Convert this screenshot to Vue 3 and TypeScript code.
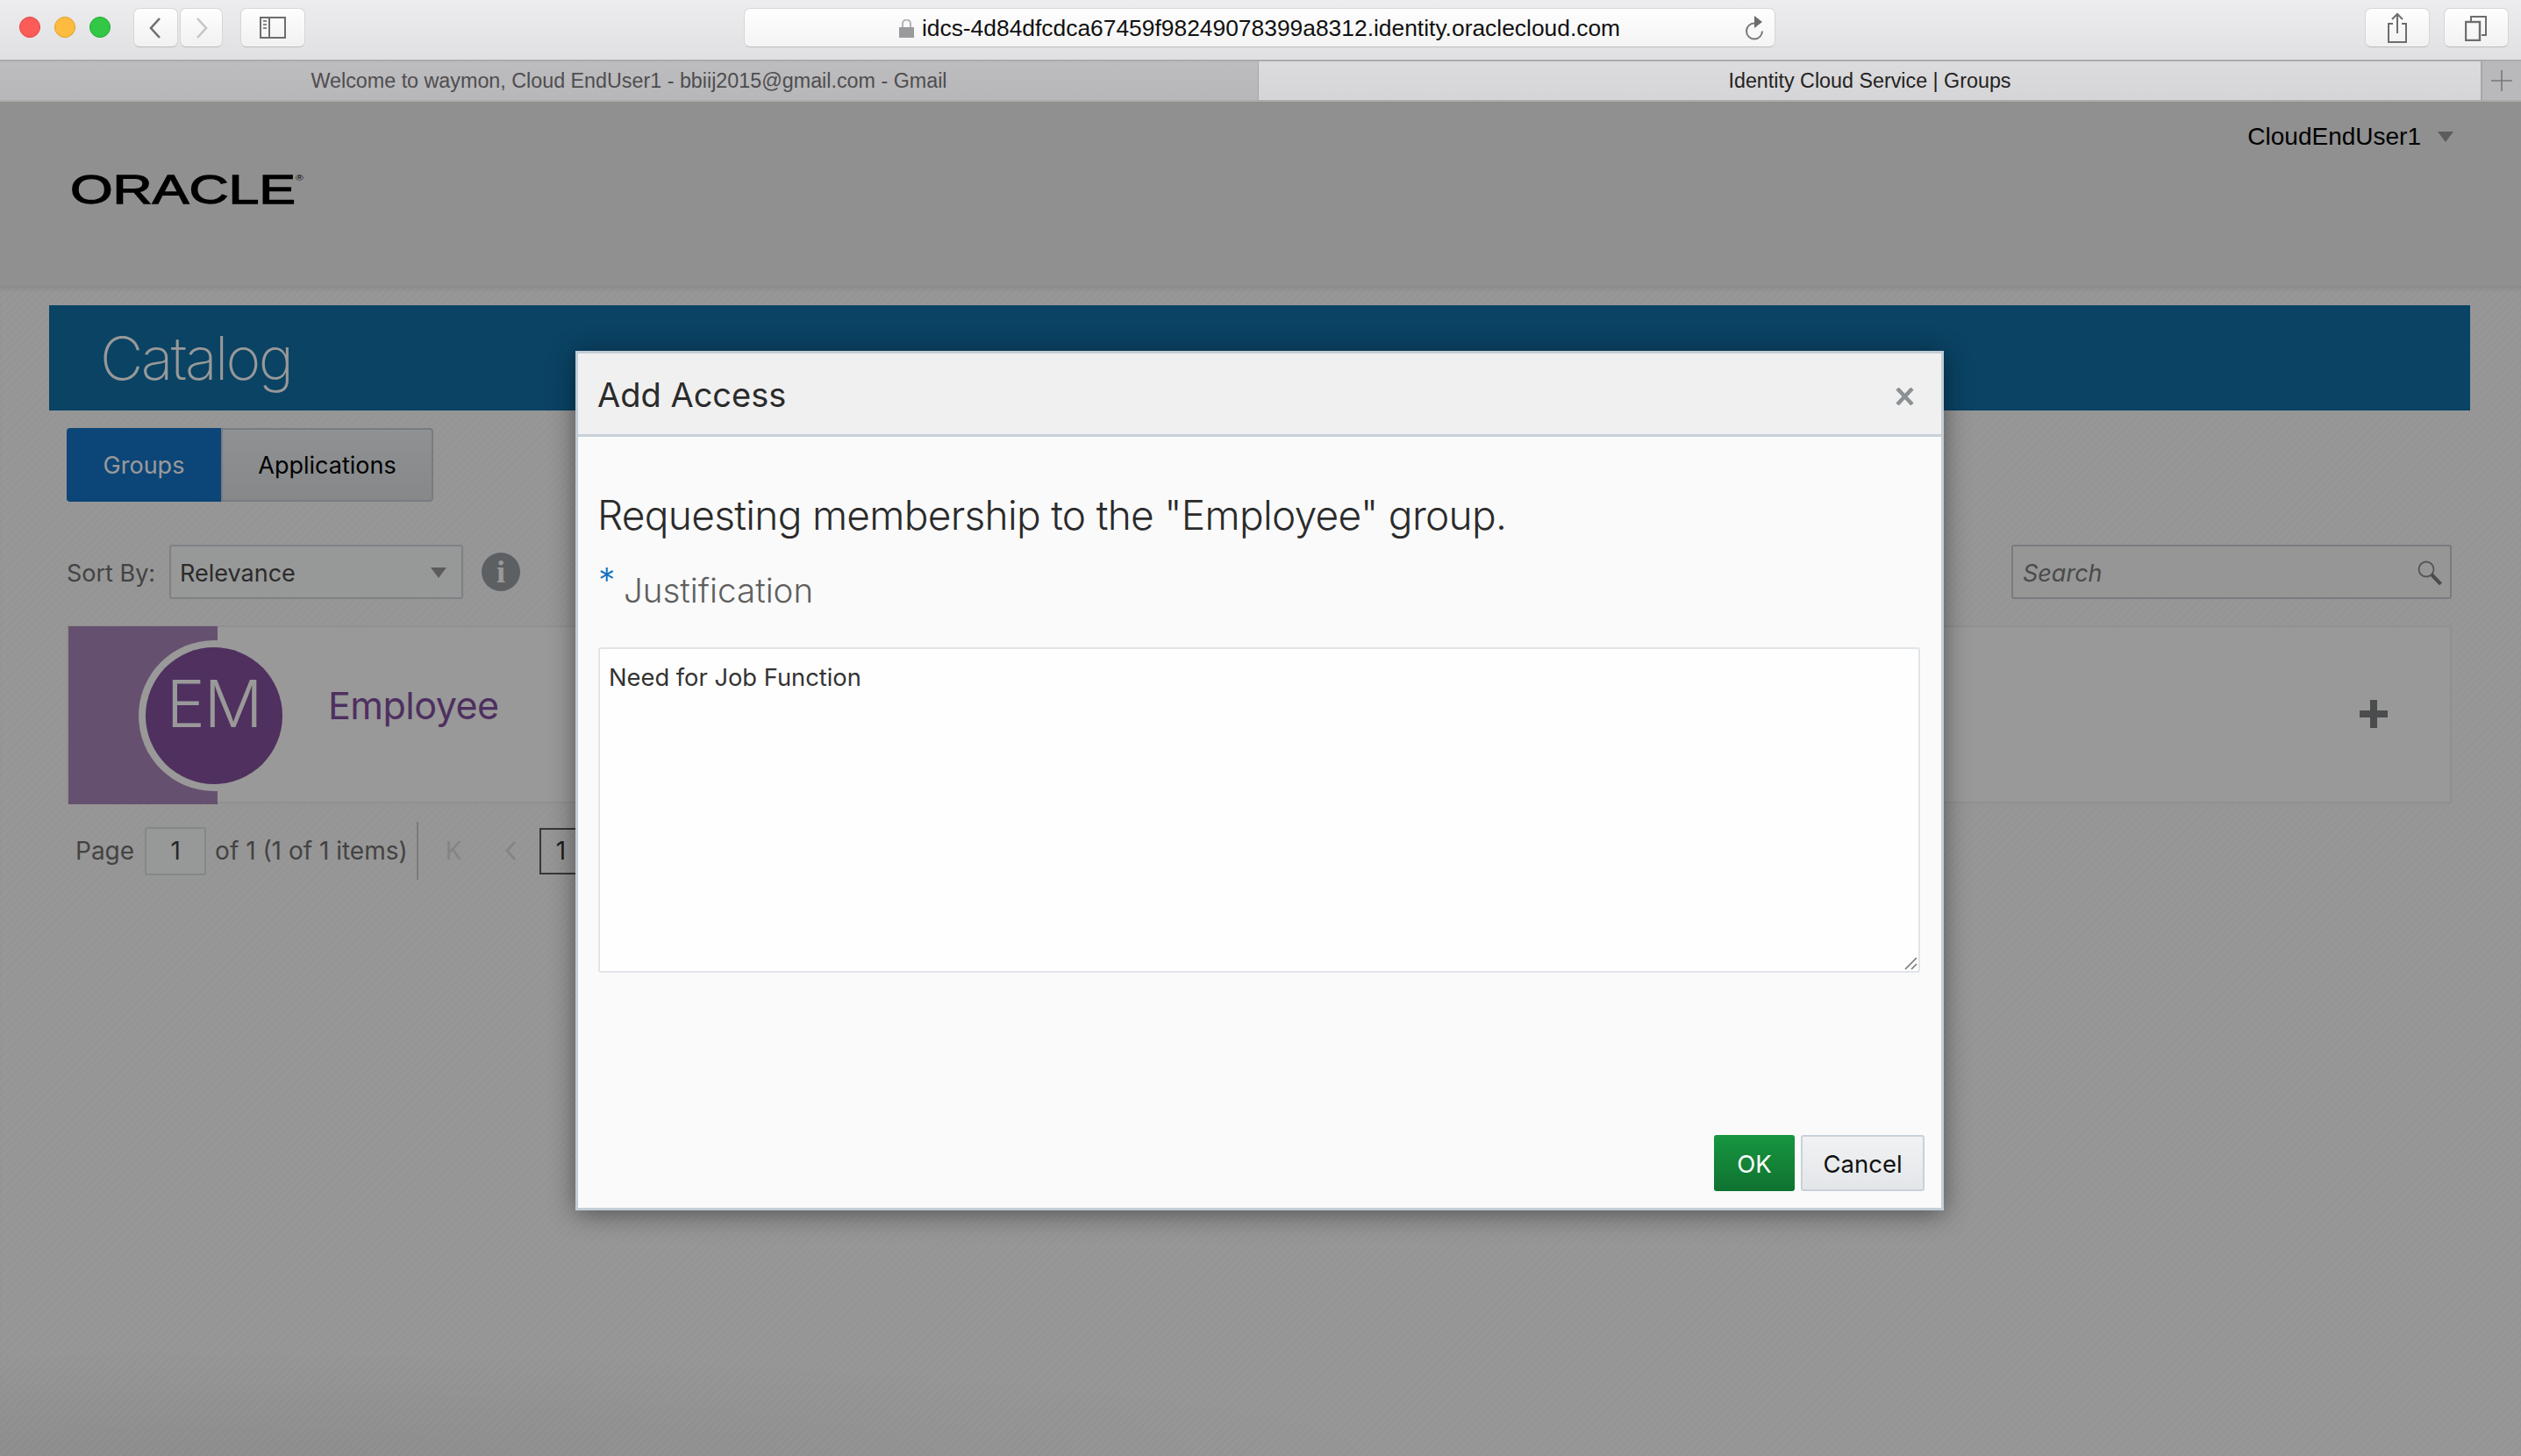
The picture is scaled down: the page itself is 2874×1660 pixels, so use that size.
<template>
  <div class="screen">
    <div class="toolbar">
      <div class="lights">
        <span class="light red"></span>
        <span class="light amber"></span>
        <span class="light green"></span>
      </div>
      <div class="nav-pair">
        <button class="tool-btn back">
          <svg width="16" height="26" viewBox="0 0 16 26"><path d="M12 2 2 13l10 11" fill="none" stroke="#6f6f71" stroke-width="2.6" /></svg>
        </button>
        <button class="tool-btn forward">
          <svg width="16" height="26" viewBox="0 0 16 26"><path d="m3 2 10 11L3 24" fill="none" stroke="#c6c6c8" stroke-width="2.6" /></svg>
        </button>
      </div>
      <button class="tool-btn sidebar">
        <svg width="30" height="25" viewBox="0 0 30 25">
          <rect x="1" y="1" width="28" height="23" fill="none" stroke="#6d6d6f" stroke-width="2" />
          <path d="M11 1v23" stroke="#6d6d6f" stroke-width="2" />
          <path d="M4 5h4M4 9h4M4 13h4" stroke="#8a8a8c" stroke-width="2" />
        </svg>
      </button>
      <div class="address">
        <svg class="lock" width="17" height="21" viewBox="0 0 17 21">
          <rect x="0" y="9" width="17" height="12" fill="#9a9a9c" />
          <path d="M4 9V5a4.500 4.500 0 0 1 9 0v4" fill="none" stroke="#b2b2b4" stroke-width="2" />
        </svg>
        <span class="url">{{ url }}</span>
        <svg class="reload" width="24" height="30" viewBox="0 0 24 30">
          <path d="M13 7.500a9 9 0 1 0 9 9" fill="none" stroke="#77777a" stroke-width="2" transform="translate(-1 2)" />
          <path d="M12 1l9 7-9 7z" fill="#6c6c6e" />
        </svg>
      </div>
      <button class="tool-btn action">
        <svg width="24" height="36" viewBox="0 0 24 36">
          <path d="M7 13H2v21h20V13h-5" fill="none" stroke="#6d6d6f" stroke-width="2" />
          <path d="M12 24V2M6 8l6-6 6 6" fill="none" stroke="#6d6d6f" stroke-width="2" />
        </svg>
      </button>
      <button class="tool-btn action">
        <svg width="26" height="30" viewBox="0 0 26 30">
          <rect x="1" y="8" width="16" height="21" fill="none" stroke="#6d6d6f" stroke-width="2.400" />
          <path d="M7 7V2h17v21h-5" fill="none" stroke="#6d6d6f" stroke-width="2" />
        </svg>
      </button>
    </div>

    <div class="tabstrip">
      <div class="browser-tab idle">{{ tabs[0] }}</div>
      <div class="browser-tab current">{{ tabs[1] }}</div>
      <div class="new-tab">
        <svg width="24" height="24" viewBox="0 0 24 24"><path d="M12 0v24M0 12h24" stroke="#77777a" stroke-width="1.600" /></svg>
      </div>
    </div>

    <div class="page">
      <header class="page-header">
        <div class="logo">ORACLE<sup>®</sup></div>
        <div class="user">
          <span>CloudEndUser1</span>
          <i class="caret"></i>
        </div>
      </header>

      <main class="content">
        <div class="banner"><h1>Catalog</h1></div>

        <div class="tabs">
          <button class="tab selected">Groups</button>
          <button class="tab">Applications</button>
        </div>

        <div class="filters">
          <label class="sort-label">Sort By:</label>
          <div class="select">
            <span>Relevance</span>
            <i class="caret small"></i>
          </div>
          <span class="info">i</span>
          <div class="search">
            <span>Search</span>
            <svg width="28" height="28" viewBox="0 0 28 28">
              <circle cx="10" cy="10" r="8.500" fill="none" stroke="#8d8f91" stroke-width="1.800" />
              <path d="m16 16 10.500 11" stroke="#7b7d7f" stroke-width="4" />
            </svg>
          </div>
        </div>

        <div class="card">
          <div class="card-band"></div>
          <div class="avatar">EM</div>
          <div class="card-name">Employee</div>
          <svg class="add" width="32" height="32" viewBox="0 0 32 32"><path d="M16 0v32M0 16h32" stroke="#7c7f82" stroke-width="8" /></svg>
        </div>

        <div class="pager">
          <span>Page</span>
          <span class="page-input">1</span>
          <span>of 1 (1 of 1 items)</span>
          <span class="pager-rule"></span>
          <span class="pager-first">K</span>
          <svg class="pager-prev" width="14" height="24" viewBox="0 0 14 24"><path d="M12 2 3 12l9 10" fill="none" stroke="#dedede" stroke-width="3" /></svg>
          <span class="page-current">1</span>
        </div>
      </main>

      <div class="scrim"></div>
    </div>

    <section class="dialog">
      <div class="dialog-head">
        <h2>Add Access</h2>
        <svg class="close" width="21" height="20" viewBox="0 0 21 20"><path d="m2 1 17 18M19 1 2 19" stroke="#8a9094" stroke-width="4.500" /></svg>
      </div>
      <div class="dialog-body">
        <p class="request">Requesting membership to the "Employee" group.</p>
        <div class="field-label"><span class="required">*</span><span>Justification</span></div>
        <div class="justify-wrap">
          <textarea v-model="justification" class="justify"></textarea>
          <svg class="grip" width="15" height="15" viewBox="0 0 15 15"><path d="M1 14 14 1M8 14l6-6" stroke="#707070" stroke-width="1.500" /></svg>
        </div>
      </div>
      <div class="dialog-foot">
        <button class="btn ok">OK</button>
        <button class="btn cancel">Cancel</button>
      </div>
    </section>
  </div>
</template>

<script setup lang="ts">
import { ref } from 'vue'

const url = 'idcs-4d84dfcdca67459f98249078399a8312.identity.oraclecloud.com'
const tabs: string[] = [
  'Welcome to waymon, Cloud EndUser1 - bbiij2015@gmail.com - Gmail',
  'Identity Cloud Service | Groups',
]
const justification = ref('Need for Job Function')
</script>

<style>
html,
body {
  margin: 0;
  background: #8f8f8f;
}
</style>

<style scoped>
.screen {
  position: relative;
  width: 2874px;
  height: 1660px;
  overflow: hidden;
  display: flex;
  flex-direction: column;
  font-family: "Liberation Sans", Arial, sans-serif;
}

button {
  font-family: inherit;
  padding: 0;
  cursor: pointer;
}

/* browser chrome */
.toolbar {
  height: 68px;
  box-sizing: border-box;
  padding: 9px 14px 14px 22px;
  display: flex;
  align-items: stretch;
  background: linear-gradient(#edecee, #e0dfe1);
}

.lights {
  display: flex;
  align-items: center;
  gap: 16px;
  width: 130px;
  margin-top: -1px;
}

.light {
  width: 24px;
  height: 24px;
  border-radius: 50%;
  box-sizing: border-box;
}

.red {
  background: #fc5c57;
  border: 1px solid #e0443e;
}

.amber {
  background: #fdbc3f;
  border: 1px solid #dfa023;
}

.green {
  background: #33c748;
  border: 1px solid #1dad2b;
}

.tool-btn {
  display: flex;
  align-items: center;
  justify-content: center;
  box-sizing: border-box;
  border: 1px solid #d6d5d7;
  border-bottom-color: #bdbcbe;
  border-radius: 7px;
  background: linear-gradient(#fefefe, #f1f1f1);
}

.nav-pair {
  display: flex;
  gap: 2px;
}

.back {
  width: 51px;
}

.forward {
  width: 49px;
}

.sidebar {
  width: 74px;
  margin-left: 20px;
}

.address {
  width: 1176px;
  margin-left: 500px;
  margin-right: auto;
  box-sizing: border-box;
  position: relative;
  display: flex;
  align-items: center;
  justify-content: center;
  gap: 9px;
  padding-top: 2px;
  border: 1px solid #d6d5d7;
  border-bottom-color: #bdbcbe;
  border-radius: 7px;
  background: linear-gradient(#fefefe, #f4f4f4);
}

.url {
  font-size: 26.4px;
  color: #111;
}

.reload {
  position: absolute;
  right: 11px;
  top: 7px;
}

.action {
  width: 74px;
  margin-left: 16px;
}

.action:first-of-type {
  margin-left: 0;
}

.tabstrip {
  height: 48px;
  display: flex;
  box-sizing: border-box;
  border-top: 2px solid #ababad;
  border-bottom: 2px solid #ababad;
  font-size: 23.3px;
}

.browser-tab {
  display: flex;
  align-items: center;
  justify-content: center;
}

.idle {
  width: 1435px;
  background: linear-gradient(#bdbcbe, #b7b6b8);
  color: #4e4d50;
  border-right: 1px solid #a6a5a7;
  box-sizing: border-box;
}

.current {
  width: 1393px;
  background: linear-gradient(#dcdbdd, #d5d4d6);
  color: #222;
}

.new-tab {
  flex: 1;
  display: flex;
  align-items: center;
  justify-content: center;
  background: #b9b8ba;
  border-left: 2px solid #a6a5a7;
}

/* page under the dialog */
.page {
  position: relative;
  flex: 1;
  display: flex;
  flex-direction: column;
}

.page-header {
  height: 210px;
  box-sizing: border-box;
  display: flex;
  justify-content: space-between;
  background: #f0f0f0;
  padding: 20px 77px 0 80px;
}

.logo {
  margin-top: 53px;
  font-size: 47px;
  line-height: 54px;
  height: 54px;
  font-weight: 400;
  color: #000;
  -webkit-text-stroke: 1.3px #000;
  transform: scaleX(1.33);
  transform-origin: left;
}

.logo sup {
  font-size: 9px;
  vertical-align: 26px;
  line-height: 0;
  -webkit-text-stroke: 0;
}

.user {
  display: flex;
  align-items: center;
  gap: 19px;
  height: 40px;
  font-size: 28px;
  color: #000;
}

.caret {
  display: block;
  width: 0;
  height: 0;
  border-left: 9px solid transparent;
  border-right: 9px solid transparent;
  border-top: 12px solid #999;
}

.content {
  flex: 1;
  box-sizing: border-box;
  padding: 22px 58px 0 56px;
  font-family: Inter, "Liberation Sans", sans-serif;
  background:
    radial-gradient(1400px 120px at 200px 1334px, rgba(0, 0, 0, .06), transparent),
    repeating-linear-gradient(135deg, #fcfcfc 0 3px, #f8f8f8 3px 6px);
  box-shadow: inset 0 6px 6px -4px rgba(0, 0, 0, .12);
}

.banner {
  height: 120px;
  box-sizing: border-box;
  padding: 18px 0 0 58px;
  background: #1271a7;
}

.banner h1 {
  margin: 0;
  font-size: 68px;
  line-height: 84px;
  font-weight: 200;
  color: #fff;
  letter-spacing: -2.6px;
}

.tabs {
  display: flex;
  margin: 20px 0 0 20px;
  height: 84px;
}

.tab {
  font-size: 27px;
  border: 2px solid #c8ced5;
  background: linear-gradient(#eff2f5, #dfe3e6);
  color: #000;
  width: 242px;
  border-radius: 0 4px 4px 0;
  font-family: inherit;
}

.tab.selected {
  width: 176px;
  border: 0;
  border-radius: 4px 0 0 4px;
  background: #1573c6;
  color: #fff;
}

.filters {
  display: flex;
  align-items: center;
  height: 62px;
  margin: 49px 21px 0 20px;
  font-size: 27px;
  color: #707070;
}

.sort-label {
  width: 117px;
  padding-top: 2px;
}

.select {
  width: 335px;
  height: 62px;
  box-sizing: border-box;
  border: 2px solid #d3d8dd;
  border-radius: 3px;
  background: #fcfefe;
  display: flex;
  align-items: center;
  justify-content: space-between;
  padding: 2px 17px 0 10px;
  color: #484848;
}

.info {
  width: 44px;
  height: 44px;
  margin-left: 21px;
  border-radius: 50%;
  background: #9aa0a6;
  color: #fff;
  font-family: "Liberation Serif", serif;
  font-weight: 700;
  font-size: 36px;
  line-height: 44px;
  text-align: center;
}

.search {
  margin-left: auto;
  width: 502px;
  height: 62px;
  box-sizing: border-box;
  border: 2px solid #c8ced5;
  border-radius: 3px;
  background: #f8faf9;
  display: flex;
  align-items: center;
  justify-content: space-between;
  padding: 2px 9px 0 11px;
  font-style: italic;
  color: #7c7c7c;
}

.card {
  position: relative;
  margin: 30px 21px 0 20px;
  height: 203px;
  box-sizing: border-box;
  border: 2px solid #f0f0f0;
  background: #fff;
  display: flex;
  align-items: center;
}

.card-band {
  width: 170px;
  align-self: stretch;
  margin: -1px 0 -3px 0;
  background: #ab85b9;
}

/* ring sits on top of the band */
.avatar {
  position: absolute;
  left: 88px;
  top: 23px;
  width: 156px;
  height: 128px;
  padding-bottom: 28px;
  border-radius: 50%;
  background: #84519e;
  box-shadow: 0 0 0 8px #fff;
  color: #fff;
  font-size: 74px;
  font-weight: 300;
  display: flex;
  align-items: center;
  justify-content: center;
  letter-spacing: -1px;
}

.card-name {
  margin: -21px 0 0 126px;
  font-size: 43px;
  color: #834fa0;
  letter-spacing: -.5px;
}

.add {
  margin-left: auto;
  margin-right: 71px;
  margin-top: -2px;
}

.pager {
  display: flex;
  align-items: center;
  height: 66px;
  margin: 21px 0 0 30px;
  font-size: 28px;
  color: #707070;
}

.page-input {
  width: 70px;
  height: 55px;
  margin: 0 10px 0 12px;
  box-sizing: border-box;
  border: 2px solid #dde1e5;
  border-radius: 3px;
  background: #fcfdfd;
  color: #444;
  display: flex;
  align-items: center;
  justify-content: center;
}

.pager-rule {
  width: 2px;
  height: 66px;
  margin: 0 31px 0 10px;
  background: #c8ced5;
}

.pager-first {
  color: #ddd;
  margin-right: 48px;
}

.pager-prev {
  margin-right: 26px;
}

.page-current {
  width: 50px;
  height: 53px;
  box-sizing: border-box;
  border: 2px solid #5c5c5c;
  color: #333;
  display: flex;
  align-items: center;
  justify-content: center;
}

.scrim {
  position: absolute;
  inset: 0;
  background: rgba(0, 0, 0, .4);
}

/* dialog */
.dialog {
  position: absolute;
  left: 656px;
  top: 400px;
  width: 1560px;
  height: 980px;
  box-sizing: border-box;
  display: flex;
  flex-direction: column;
  border: 3px solid #c3cdd6;
  background: #fafafa;
  box-shadow: 0 4px 28px rgba(0, 0, 0, .45);
  font-family: Inter, "Liberation Sans", sans-serif;
}

.dialog-head {
  height: 95px;
  flex: none;
  box-sizing: border-box;
  display: flex;
  align-items: center;
  justify-content: space-between;
  padding: 2px 31px 0 22px;
  background: #f0f0f0;
  border-bottom: 3px solid #c8d1d9;
}

.dialog-head h2 {
  margin: 0;
  font-size: 38px;
  font-weight: 400;
  color: #2b2b2b;
}

.close {
  margin-top: 3px;
}

.dialog-body {
  flex: 1;
  padding: 0 24px 0 23px;
  display: flex;
  flex-direction: column;
}

.request {
  margin: 61px 0 0 -1px;
  font-size: 46px;
  line-height: 56px;
  font-weight: 300;
  letter-spacing: -.7px;
  color: #2b2b2b;
}

.field-label {
  display: flex;
  margin-top: 31px;
  font-size: 38.5px;
  line-height: 54px;
  font-weight: 300;
  color: #5f5f5f;
}

.required {
  width: 29px;
  margin-top: -12px;
  color: #1270c0;
}

.justify-wrap {
  position: relative;
  margin-top: 38px;
}

.justify {
  display: block;
  width: 100%;
  box-sizing: border-box;
  height: 371px;
  padding: 15px 10px;
  border: 2px solid #e1e5ea;
  border-radius: 3px;
  background: #fefefe;
  font-family: inherit;
  font-size: 27.3px;
  line-height: 36px;
  color: #333;
  outline: none;
  resize: none;
}

.grip {
  position: absolute;
  right: 3px;
  bottom: 3px;
}

.dialog-foot {
  display: flex;
  justify-content: flex-end;
  gap: 7px;
  padding: 0 19px 19px 0;
}

.btn {
  height: 64px;
  box-sizing: border-box;
  padding-top: 1px;
  font-size: 27.5px;
  border-radius: 3px;
  font-family: inherit;
}

.ok {
  width: 92px;
  border: 0;
  background: linear-gradient(#17963f, #0f7230);
  color: #fff;
}

.cancel {
  width: 141px;
  border: 2px solid #c8d1d9;
  background: linear-gradient(#f1f2f4, #e3e6e9);
  color: #111;
}
</style>
